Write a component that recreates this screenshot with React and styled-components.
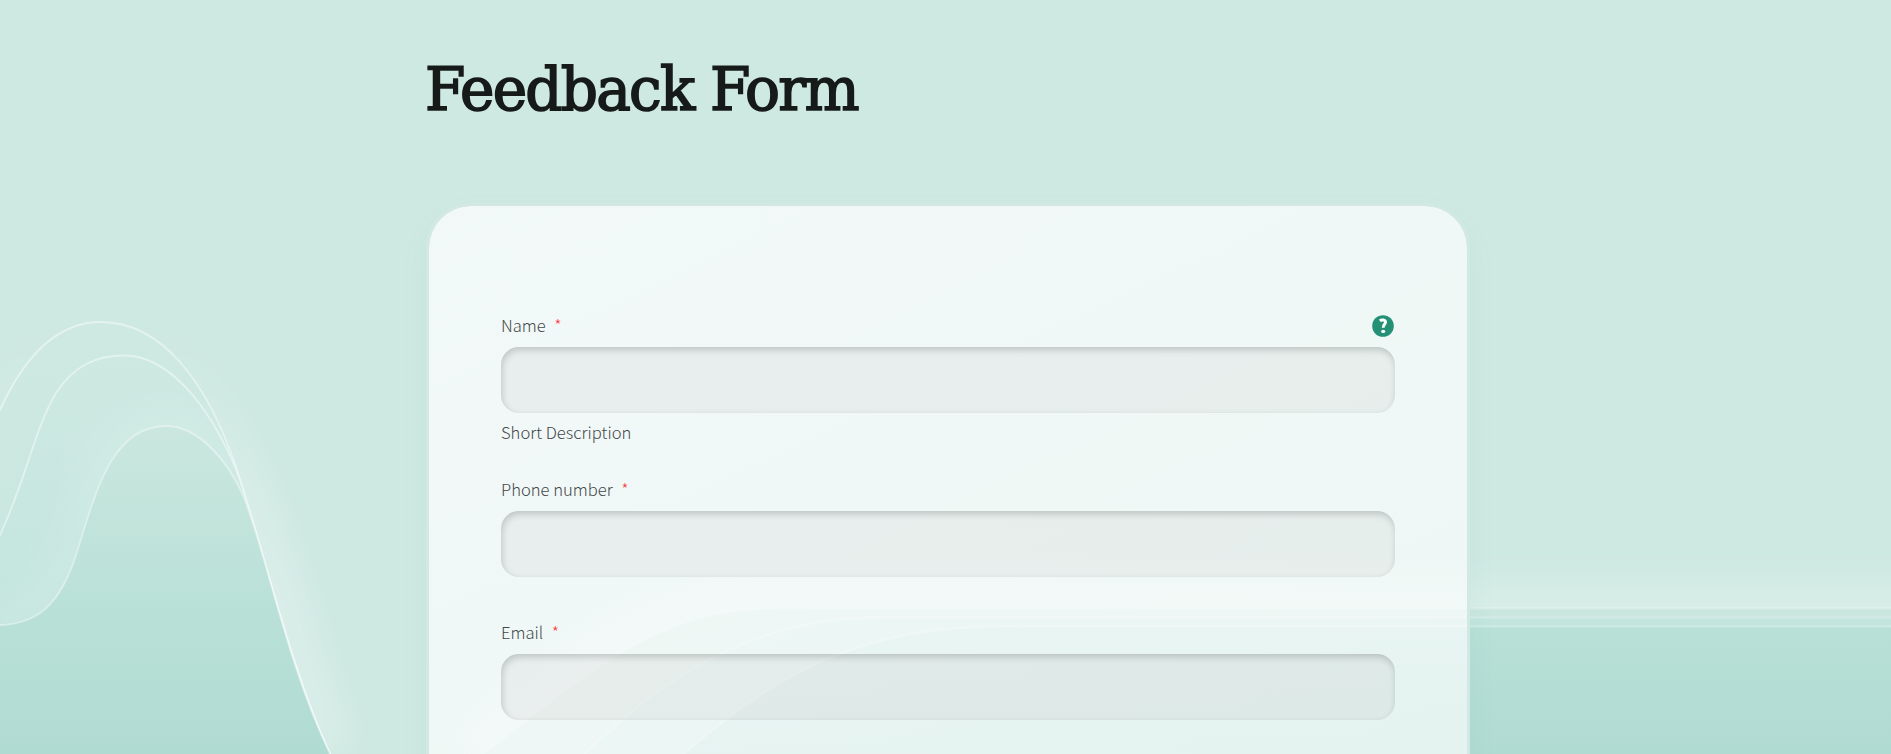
import React from "react";
import styled, { createGlobalStyle } from "styled-components";

const GlobalStyle = createGlobalStyle`
  * { box-sizing: border-box; }
  html, body { margin: 0; height: 100%; }
  body { background: #cee9e2; overflow: hidden; }
`;

const Page = styled.main`
  position: relative;
  height: 754px;
  overflow: hidden;
  padding-left: 426px;
  background: #cee9e2;
  font-family: "Noto Sans CJK SC", "Noto Sans", sans-serif;
`;

const Backdrop = styled.svg`
  position: absolute;
  inset: 0;
`;

const Content = styled.div`
  position: relative;
  width: 1044px;
`;

const Title = styled.h1`
  margin: 0 0 0 -1px;
  padding-top: 47px;
  height: 203px;
  color: #161a19;
  font-family: "DejaVu Serif Condensed", "DejaVu Serif", serif;
  font-stretch: condensed;
  font-size: 60px;
  font-weight: 400;
  line-height: 84px;
  letter-spacing: -1.6px;
  white-space: nowrap;
  transform: scaleX(1.076);
  transform-origin: 0 0;
  -webkit-text-stroke: 1.6px #161a19;
`;

const Card = styled.form`
  height: 900px;
  padding: 103px 72px 0;
  border: 3px solid #d2e9e3;
  border-radius: 45px;
  background: linear-gradient(155deg, rgba(253, 253, 255, 0.76), rgba(255, 255, 255, 0.65) 80%);
  background-clip: padding-box;
  box-shadow: 0 12px 28px rgba(60, 170, 150, 0.06);
`;

const Field = styled.div`
  display: flex;
  flex-direction: column;
  height: ${(p) => p.$height}px;
`;

const LabelRow = styled.div`
  display: flex;
  align-items: center;
  justify-content: space-between;
  height: 34px;
  margin-bottom: 4px;
`;

const Label = styled.label`
  color: #434849;
  font-size: 16.6px;
  font-weight: 300;
  line-height: 33px;
  padding-bottom: 1px;
`;

const Required = styled.span`
  margin-left: 8.5px;
  color: #fb3a38;
`;

const Input = styled.input`
  flex: none;
  width: 894px;
  height: 66px;
  padding: 0 20px;
  border: 0;
  outline: 0;
  border-radius: 18px;
  background: rgba(40, 25, 25, 0.043);
  box-shadow: inset 1px 3px 7px rgba(0, 0, 0, 0.18);
`;

const Hint = styled.div`
  padding-top: 2px;
  color: #434849;
  font-size: 16.6px;
  font-weight: 300;
  line-height: 34px;
`;

const HelpIcon = styled.svg`
  display: block;
  margin-right: 1px;
`;

const left = {
  a: "M-20 455 C-12 436 -6 423 0 410 C25 355 57 322 101 322 C165 322 206 388 229 448 C255 512 286 660 331 756",
  b: "M-20 577 L0 535 C26 480 34 430 56 393 C74 365 97 355.5 124 355.5 C170 355.5 210 408 235 467 C259 528 286 662 331 756",
  c: "M-20 624 L0 625 C37 624 60 605 76 555 C94 500 109 426 166 426 C200 426 228 463 242 493 C266 550 286 664 331 756",
};

const right = {
  a: "M481 756 L483 754 C580 680 655 608.5 768 608.5 H1960",
  b: "M583 756 L585 754 C668 672 760 617.5 880 617.5 H1960",
  c: "M682 756 L684 754 C775 675 860 626.5 1000 626.5 H1960",
};

const close = { left: " V800 H-20 Z", right: " V800 H430 Z" };

function Wave({ d, end, fill, glow, glowWidth = 44, line, lineWidth = 1.8 }) {
  return (
    <g>
      {glow && <path d={d} fill="none" stroke={glow} strokeWidth={glowWidth} filter="url(#soft)" />}
      <path d={d + end} fill={fill} />
      <path d={d} fill="none" stroke="#fff" strokeWidth={lineWidth} strokeOpacity={line} />
    </g>
  );
}

function Gradient({ id, stops }) {
  return (
    <linearGradient id={id} gradientUnits="userSpaceOnUse" x1="0" y1="320" x2="0" y2="754">
      {stops.map(([o, c]) => <stop key={o} offset={o} stopColor={c} />)}
    </linearGradient>
  );
}

function Waves() {
  return (
    <Backdrop width="1891" height="754" viewBox="0 0 1891 754" aria-hidden="true">
      <defs>
        <filter id="soft" filterUnits="userSpaceOnUse" x="-100" y="200" width="2150" height="700" colorInterpolationFilters="sRGB">
          <feGaussianBlur stdDeviation="22" />
        </filter>
        <Gradient id="fa" stops={[[0, "#cee9e2"], [0.6, "#c9e7df"], [1, "#bfe3da"]]} />
        <Gradient id="fb" stops={[[0, "#cee9e2"], [0.25, "#cbe8e1"], [0.6, "#c4e6de"], [1, "#bce2d9"]]} />
        <Gradient id="fc" stops={[[0.24, "#cbe7df"], [0.5, "#c0e3da"], [0.7, "#b8e0d7"], [1, "#b0dbd3"]]} />
        <Gradient id="glow" stops={[[0, "rgba(255,255,255,0.02)"], [0.25, "rgba(255,255,255,0.09)"], [0.6, "rgba(255,255,255,0.22)"], [1, "rgba(255,255,255,0.18)"]]} />
      </defs>
      <Wave d={right.a} end={close.right} fill="#cae6de" glow="rgba(255,255,255,0.25)" glowWidth={48} line={0.15} lineWidth={3} />
      <Wave d={right.b} end={close.right} fill="#c2e5dd" line={0.2} lineWidth={2.5} />
      <Wave d={right.c} end={close.right} fill="url(#fc)" line={0.22} lineWidth={2.5} />
      <Wave d={left.a} end={close.left} fill="url(#fa)" glow="url(#glow)" glowWidth={50} line={0.46} />
      <Wave d={left.b} end={close.left} fill="url(#fb)" line={0.45} />
      <Wave d={left.c} end={close.left} fill="url(#fc)" glow="rgba(255,255,255,0.14)" line={0.4} />
    </Backdrop>
  );
}

function Help() {
  return (
    <HelpIcon width="22" height="22" viewBox="0 0 22 22" role="img" aria-label="Help">
      <circle cx="11" cy="11" r="10.8" fill="#249075" />
      <path d="M7.9 5.8 C9.3 4.6 13.6 4.5 13.5 7.2 C13.4 9.2 11.2 9.6 11.2 12.8" fill="none" stroke="#fff" strokeWidth="2.9" />
      <ellipse cx="11.2" cy="16.4" rx="2.1" ry="1.7" fill="#fff" />
    </HelpIcon>
  );
}

function FormField({ id, label, hint, help, height }) {
  return (
    <Field $height={height}>
      <LabelRow>
        <Label htmlFor={id}>{label}<Required>*</Required></Label>
        {help && <Help />}
      </LabelRow>
      <Input id={id} />
      {hint && <Hint>{hint}</Hint>}
    </Field>
  );
}

export default function App() {
  return (
    <>
      <GlobalStyle />
      <Page>
        <Waves />
        <Content>
          <Title>Feedback Form</Title>
          <Card>
            <FormField id="name" label="Name" hint="Short Description" help height={164} />
            <FormField id="phone" label="Phone number" height={143} />
            <FormField id="email" label="Email" height={143} />
          </Card>
        </Content>
      </Page>
    </>
  );
}
